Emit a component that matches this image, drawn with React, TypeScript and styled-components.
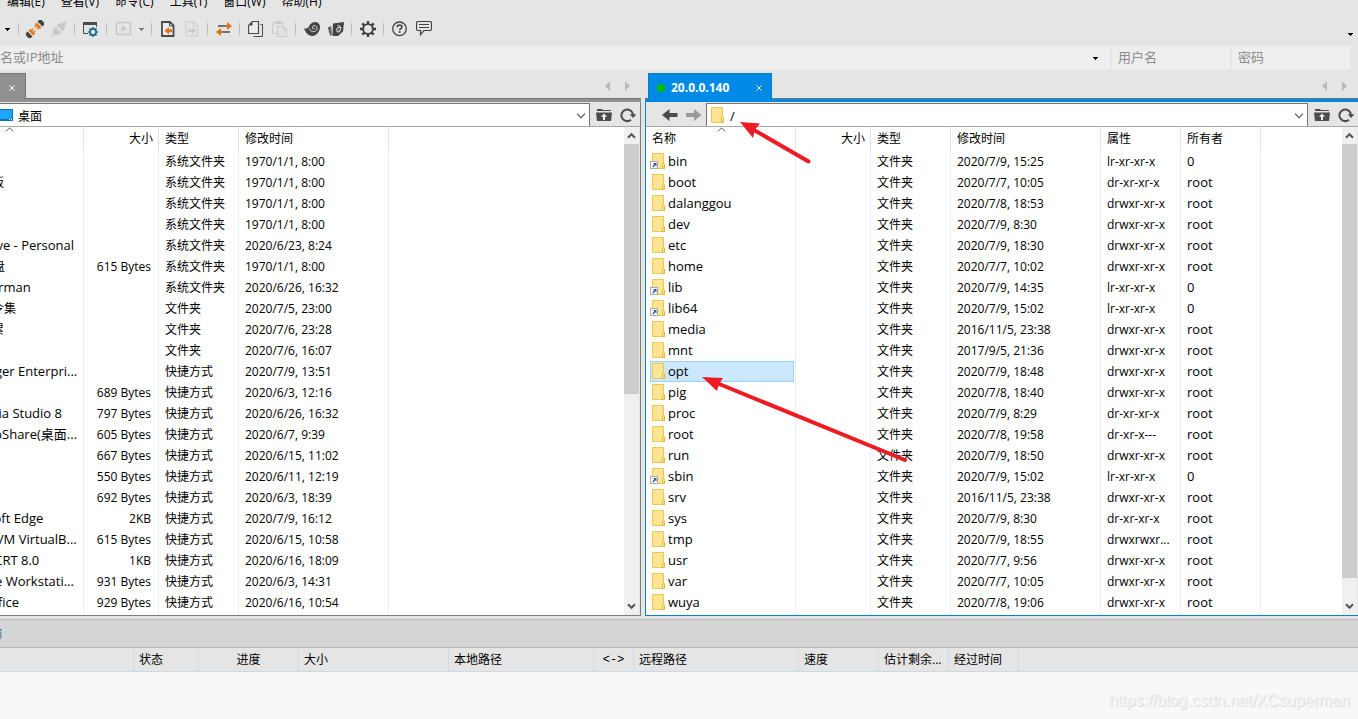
import React from "react";
import styled, { createGlobalStyle, css } from "styled-components";

const GlobalStyle = createGlobalStyle`
  * { box-sizing: border-box; }
  html, body { margin: 0; padding: 0; }
  body {
    background: #f8f8f8;
    color: #000;
    font-family: "Open Sans", "Noto Sans CJK SC", sans-serif;
    font-size: 12px;
    line-height: 16px;
    overflow: hidden;
  }
  button, input {
    font: inherit;
    color: inherit;
    border: 0;
    padding: 0;
    margin: 0;
    background: none;
    border-radius: 0;
    outline: none;
  }
`;

const Page = styled.div`
  min-height: 100vh;
  display: flex;
  flex-direction: column;
  background: #e5e5e5;
  overflow: hidden;
`;

/* ---------- menu and toolbar ---------- */

const MenuBar = styled.nav`
  height: 12px;
  display: flex;
  align-items: flex-end;
  gap: 16px;
  padding-left: 7px;
`;

const MenuButton = styled.button`
  height: 18px;
  line-height: 16px;
  padding-bottom: 2px;
  white-space: nowrap;
`;

const Toolbar = styled.div`
  height: 34px;
  display: flex;
  align-items: center;
`;

const ToolButton = styled.button<{ $width?: number }>`
  width: ${(p) => p.$width ?? 24}px;
  height: 24px;
  display: flex;
  align-items: center;
  justify-content: center;
  flex: none;
`;

const Separator = styled.span`
  width: 1px;
  height: 16px;
  margin: 0 4px 0 3px;
  background: linear-gradient(#dcdcdc, #b0b0b0, #dcdcdc);
`;

const OverflowButton = styled.button`
  margin-left: auto;
  width: 15px;
  height: 14px;
  padding-top: 1px;
  align-self: flex-end;
  display: flex;
  justify-content: center;
`;

/* ---------- quick connect ---------- */

const QuickBar = styled.form`
  height: 24px;
  display: flex;
  gap: 2px;
  padding-right: 8px;
`;

const Field = styled.label<{ $grow?: boolean }>`
  display: flex;
  align-items: center;
  overflow: hidden;
  background: #eeeeee;
  ${(p) => (p.$grow ? css`flex: 1;` : css`flex: 0 0 118px; padding-left: 6px;`)}
`;

const FieldInput = styled.input<{ $shifted?: boolean }>`
  flex: 1;
  min-width: 0;
  height: 24px;
  padding-bottom: 2px;
  font-size: 13px;
  margin-left: ${(p) => (p.$shifted ? "-26px" : "0")};
  &::placeholder { color: #8c8c8c; opacity: 1; }
`;

const DropButton = styled.button`
  width: 29px;
  height: 24px;
  display: flex;
  align-items: center;
  justify-content: center;
`;

/* ---------- panes ---------- */

const Panes = styled.main`
  display: grid;
  grid-template-columns: 641fr 713fr;
  column-gap: 4px;
`;

const Pane = styled.section`
  position: relative;
  min-width: 0;
`;

const TabStrip = styled.div<{ $inset: number }>`
  height: 29px;
  display: flex;
  align-items: flex-end;
  padding-left: ${(p) => p.$inset}px;
  border-bottom: 1px solid #757575;
`;

const Tab = styled.div<{ $active?: boolean }>`
  height: 26px;
  margin-bottom: -1px;
  display: flex;
  align-items: center;
  padding-top: 2px;
  color: #fff;
  background: ${(p) => (p.$active ? "#008ae5" : "#919191")};
  border: 1px solid ${(p) => (p.$active ? "#0a7bc8" : "#757575")};
  border-bottom: 0;
  border-left-width: ${(p) => (p.$active ? "1px" : "0")};
  width: ${(p) => (p.$active ? "124px" : "26px")};
  padding-left: ${(p) => (p.$active ? "8px" : "0")};
`;

const StatusDot = styled.span`
  width: 8px;
  height: 8px;
  border-radius: 50%;
  background: #00c000;
`;

const TabTitle = styled.span`
  flex: 1;
  padding-left: 6px;
  font-weight: 700;
`;

const TabClose = styled.button`
  width: 24px;
  height: 22px;
  display: flex;
  align-items: center;
  justify-content: center;
`;

const TabNav = styled.div<{ $end: number }>`
  margin-left: auto;
  margin-right: ${(p) => p.$end}px;
  height: 24px;
  display: flex;
  align-items: center;
`;

const Accent = styled.div<{ $active?: boolean }>`
  height: 3px;
  background: ${(p) => (p.$active ? "#008ae5" : "#919191")};
`;

const Frame = styled.div<{ $active?: boolean }>`
  border: 0 solid ${(p) => (p.$active ? "#0a7fce" : "#7d7d7d")};
  border-bottom-width: 1px;
  border-left-width: ${(p) => (p.$active ? "1px" : "0")};
  border-right-width: ${(p) => (p.$active ? "0" : "1px")};
  padding-top: 1px;
`;

const AddressRow = styled.div`
  height: 24px;
  display: flex;
  border-bottom: 1px solid #a8a8a8;
`;

const HistoryButtons = styled.div`
  width: 60px;
  display: flex;
  align-items: center;
  justify-content: flex-end;
`;

const AddressBox = styled.label<{ $left?: boolean }>`
  flex: 1;
  min-width: 0;
  display: flex;
  align-items: center;
  background: #fff;
  border: 1px solid #757575;
  border-bottom: 0;
  border-left-width: ${(p) => (p.$left ? "1px" : "0")};
  padding-left: ${(p) => (p.$left ? "3px" : "0")};
`;

const AddressInput = styled.input<{ $large?: boolean }>`
  flex: 1;
  min-width: 0;
  height: 22px;
  padding: 2px 0 0 4px;
  font-size: ${(p) => (p.$large ? "13px" : "12px")};
`;

const ComboButton = styled.button`
  width: 16px;
  height: 22px;
  padding-top: 2px;
  display: flex;
  align-items: center;
  justify-content: center;
`;

const AddressTools = styled.div`
  width: 50px;
  display: flex;
  align-items: center;
  padding-left: 2px;
`;

const Body = styled.div`
  display: flex;
  background: #fff;
`;

const TableClip = styled.div`
  flex: 1;
  min-width: 0;
  overflow: hidden;
`;

const FileTable = styled.table<{ $shift?: number }>`
  table-layout: fixed;
  width: calc(100% + ${(p) => p.$shift ?? 0}px);
  margin-left: -${(p) => p.$shift ?? 0}px;
  border-collapse: separate;
  border-spacing: 0;
  tbody tr:last-child td { padding-bottom: 2px; }
`;

const HeadCell = styled.th<{ $right?: boolean }>`
  position: relative;
  height: 24px;
  padding: 0 5px 0 6px;
  font-weight: 400;
  text-align: ${(p) => (p.$right ? "right" : "left")};
  border-right: 1px solid #e2e2e2;
  &:last-child { border-right: 0; }
`;

const SortMark = styled.svg`
  position: absolute;
  top: 0;
  left: 50%;
  margin-left: -4px;
`;

const Cell = styled.td<{ $right?: boolean }>`
  height: 21px;
  padding: 0 7px 0 6px;
  line-height: 21px;
  white-space: nowrap;
  overflow: hidden;
  text-align: ${(p) => (p.$right ? "right" : "left")};
  border-right: 1px solid #e6effb;
  &:last-child { border-right: 0; }
`;

const NameCell = styled(Cell)`
  padding: 0 1px 0 4px;
`;

const OwnerCell = styled(Cell)`
  font-size: 13px;
`;

const Entry = styled.div<{ $selected?: boolean }>`
  height: 21px;
  display: flex;
  align-items: center;
  gap: 1px;
  font-size: 13px;
  line-height: 19px;
  border: 1px solid ${(p) => (p.$selected ? "#99d1ff" : "transparent")};
  background: ${(p) => (p.$selected ? "#cce8ff" : "transparent")};
`;

const LocalEntry = styled(Entry)<{ $chinese?: boolean }>`
  font-size: ${(p) => (p.$chinese ? "12px" : "13px")};
  padding-left: ${(p) => (p.$chinese ? "17px" : "14px")};
`;

const ScrollBar = styled.div`
  width: 16px;
  display: flex;
  flex-direction: column;
  background: #f0f0f0;
  border-right: 1px solid #e5e5e5;
`;

const ScrollButton = styled.button`
  height: 17px;
  display: flex;
  align-items: center;
  justify-content: center;
`;

const Track = styled.div`
  flex: 1;
`;

const Thumb = styled.div<{ $size: number }>`
  height: ${(p) => p.$size}%;
  background: #cdcdcd;
`;

const Arrows = styled.svg`
  position: absolute;
  left: 55px;
  top: 50px;
  pointer-events: none;
`;

/* ---------- transfer window ---------- */

const TransferTitle = styled.div`
  margin-top: 3px;
  height: 29px;
  display: flex;
  align-items: center;
  background: #d6d6d6;
  border-top: 1px solid #b8b8b8;
  border-bottom: 1px solid #b8b8b8;
  overflow: hidden;
`;

const TransferLabel = styled.span`
  margin-left: -22px;
  color: #1f5c94;
`;

const TransferTable = styled.table`
  table-layout: fixed;
  width: 100%;
  border-collapse: separate;
  border-spacing: 0;
`;

const TransferHead = styled.th<{ $center?: boolean; $mono?: boolean }>`
  height: 24px;
  padding: 0 5px;
  font-weight: 400;
  white-space: nowrap;
  ${(p) => p.$mono && css`font-family: "Liberation Mono", monospace;`}
  text-align: ${(p) => (p.$center ? "center" : "left")};
  border-right: 1px solid #d0d9e6;
  border-bottom: 1px solid #ccd8e4;
  &:last-child { border-right: 0; }
`;

const Footer = styled.footer`
  flex: 1;
  min-height: 47px;
  display: flex;
  justify-content: flex-end;
  align-items: flex-end;
  padding: 0 8px 8px 0;
  background: #f8f8f8;
`;

const Watermark = styled.a`
  font-family: "Liberation Sans", sans-serif;
  font-size: 16px;
  line-height: 20px;
  color: #f2f2f2;
  text-decoration: none;
  text-shadow: 1px 1px 0 #dcdcdc;
`;

/* ---------- icons ---------- */

const Caret = ({ color = "#000" }: { color?: string }) => (
  <svg width="5" height="3" viewBox="0 0 5 3" shapeRendering="crispEdges">
    <path d="M0 0h5v1H0zM1 1h3v1H1zM2 2h1v1H2z" fill={color} />
  </svg>
);

const Chevron = () => (
  <svg width="10" height="6" viewBox="0 0 10 6">
    <path d="M1 .7l4 4 4-4" fill="none" stroke="#505050" strokeWidth="1.1" />
  </svg>
);

const ScrollArrow = ({ down }: { down?: boolean }) => (
  <svg width="9" height="7" viewBox="0 0 9 7">
    <path d={down ? "M1 1.2l3.5 3.6L8 1.2" : "M1 5.8l3.5-3.6L8 5.8"} fill="none" stroke="#555" strokeWidth="2" />
  </svg>
);

const Triangle = ({ right }: { right?: boolean }) => (
  <svg width="6" height="10" viewBox="0 0 6 10">
    <path d={right ? "M0 0l5 5-5 5z" : "M5 0L0 5l5 5z"} fill="#b8b8b8" />
  </svg>
);

const CloseMark = () => (
  <svg width="6" height="6" viewBox="0 0 6 6">
    <path d="M.5.5l5 5M5.5.5l-5 5" stroke="#fff" strokeWidth="1" />
  </svg>
);

const PlugIcon = ({ off }: { off?: boolean }) => {
  const body = off ? "#c8c8c8" : "#444";
  const pin = off ? "#c8c8c8" : "#e07b1c";
  return (
    <svg width="18" height="18" viewBox="0 0 18 18">
      <g transform="rotate(-45 9 9)">
        {off ? (
          <>
            <path d="M-2 8.3h4v1.500h-4zM16 8.300h4v1.500h-4z" fill={body} />
            <path d="M2 6.200h3v-1.400h3v8.400H5v-1.400H2zM16 6.200h-3v-1.400h-3v8.400h3v-1.400h3z" fill={body} />
            <path d="M8 7h2M8 11h2" stroke={body} />
          </>
        ) : (
          <>
            <path d="M-2 7q0-1.500 1.500-1.500H2v7H-.5Q-2 12.500-2 11zM20 7q0-1.500-1.500-1.500H16v7h2.500Q20 12.500 20 11z" fill={body} />
            <path d="M3.200 5.500H6V7h2v1.300H6v1.500h2v1.300H6v1.400H3.200zM14.800 5.500H12V7h-2v1.300h2v1.500h-2v1.300h2v1.400h2.800z" fill={pin} />
          </>
        )}
      </g>
    </svg>
  );
};

const WindowGearIcon = () => (
  <svg width="16" height="16" viewBox="1 0 16 16">
    <path d="M1 1h14v3H1z" fill="#4a4a4a" />
    <path d="M1.500 3v9.500H6M14.500 3v3" fill="none" stroke="#4a4a4a" />
    <circle cx="11" cy="11" r="3" fill="#f4f4f4" stroke="#1b7399" strokeWidth="1.800" />
    <path d="M11 6v2M11 14v2M6 11h2M14 11h2M7.500 7.500l1.400 1.400M13.100 13.100l1.400 1.400M14.500 7.500l-1.400 1.400M8.900 13.100l-1.400 1.400" stroke="#1b7399" strokeWidth="1.700" />
  </svg>
);

const PlayIcon = () => (
  <svg width="16" height="16" viewBox="0 0 16 16">
    <rect x="1.500" y="1.500" width="14" height="12" rx="1" fill="none" stroke="#c6c6c6" strokeWidth="1.400" />
    <path d="M6.500 4.300l5 3.200-5 3.200z" fill="#c6c6c6" />
  </svg>
);

const FileArrowIcon = ({ off }: { off?: boolean }) => (
  <svg width="16" height="16" viewBox="0 1 16 16">
    <path d="M2 2h8l3.500 3.500V16H2z" fill={off ? "none" : "#ececec"} stroke={off ? "#cbcbcb" : "#4a4a4a"} strokeWidth={off ? 1 : 1.800} />
    <path d="M9.500 2v4h4" fill="none" stroke={off ? "#cbcbcb" : "#4a4a4a"} />
    {off ? (
      <path d="M4 9.500h4V7l4 3.700-4 3.700V12H4z" fill="#cbcbcb" />
    ) : (
      <path d="M12 9.300H9V7l-4.500 3.700 4.500 3.700V12.200h3z" fill="#dd7314" />
    )}
  </svg>
);

const TransferIcon = () => (
  <svg width="18" height="14" viewBox="0 0 18 14">
    <path d="M3 4h9" stroke="#555" strokeWidth="1.600" />
    <path d="M12 0l5 4-5 4z" fill="#dd7314" />
    <path d="M6 10h9" stroke="#555" strokeWidth="1.600" />
    <path d="M10 4h3M5 10h3" stroke="#dd7314" strokeWidth="1.600" />
    <path d="M6 6l-5 4 5 4z" fill="#dd7314" />
  </svg>
);

const CopyIcon = () => (
  <svg width="16" height="16" viewBox="1 1 16 16">
    <path d="M5.500 1.500h6v12h-10v-8z" fill="#ededed" stroke="#4a4a4a" strokeWidth="1.200" />
    <path d="M1.500 5.500h4v-4z" fill="#4a4a4a" />
    <path d="M13.500 4.500h2v12h-9" fill="none" stroke="#4a4a4a" />
  </svg>
);

const PasteIcon = () => (
  <svg width="16" height="16" viewBox="1 1 16 16">
    <path d="M6 13.500H1.500v-11H4M10 2.500h2V5" fill="none" stroke="#cbcbcb" />
    <path d="M4 1h6v3H4z" fill="#cbcbcb" />
    <path d="M6.500 6.500h6l3 3v7h-9z" fill="#e2e2e2" stroke="#cbcbcb" />
    <path d="M12.500 6.500v3h3" fill="none" stroke="#cbcbcb" />
  </svg>
);

const ShellIcon = () => (
  <svg width="16" height="16" viewBox="0 0 16 16">
    <path d="M0 7.500c2 .5 4-.3 5-2C6 2.500 8.500 1 11 1c3.300 0 5.300 2.400 5 5.700C15.600 11 12 15 8.500 15 4.500 15 1.500 11.500 0 7.500z" fill="#444" />
    <path d="M5.300 7.500c.7 2.800 4 4 6.300 2.500 2-1.400 2-4.600-.2-5.300-1.700-.5-3.300.8-3 2.200.3 1.200 2 1.500 2.600.4" fill="none" stroke="#dedede" strokeWidth="1" />
  </svg>
);

const FtpIcon = () => (
  <svg width="16" height="16" viewBox="0 0 16 16">
    <path d="M5 2.500L16 1l-1 9.500-5 4.500H4.500z" fill="#444" />
    <path d="M0 6h2l1 9H2.500L1 11zM3 4l1 10h-1L2.200 6z" fill="#555" />
    <path d="M9.500 4.500c3 0 3.500 2.500 2.500 5s-3.500 1.600-3.200-.8S11 6 13.500 6.500" fill="none" stroke="#dedede" strokeWidth="1.100" />
  </svg>
);

const GearIcon = () => (
  <svg width="18" height="18" viewBox="0 0 18 18">
    <circle cx="9" cy="9" r="4.900" fill="none" stroke="#3f3f3f" strokeWidth="1.900" />
    <path
      d="M9 1v3M9 14v3M1 9h3M14 9h3M3.300 3.300l2 2M12.700 12.700l2 2M14.700 3.300l-2 2M5.300 12.700l-2 2"
      stroke="#3f3f3f"
      strokeWidth="2.400"
    />
  </svg>
);

const HelpIcon = () => (
  <svg width="16" height="16" viewBox="0 0 16 16">
    <circle cx="7.500" cy="7.800" r="6.800" fill="none" stroke="#444" strokeWidth="1.300" />
    <path d="M5.200 6.300c0-1.500 1-2.300 2.400-2.300 1.300 0 2.300.8 2.300 2 0 1.600-2.200 1.500-2.200 3.200" fill="none" stroke="#444" strokeWidth="1.600" />
    <path d="M6.800 10.200h1.800v1.700H6.800z" fill="#444" />
  </svg>
);

const ChatIcon = () => (
  <svg width="16" height="16" viewBox="1 1 16 16">
    <path d="M3 1.500h12q1.500 0 1.500 1.500v6q0 1.500-1.500 1.500H9L5.500 14.700V10.500H3Q1.500 10.500 1.500 9V3Q1.500 1.500 3 1.500z" fill="none" stroke="#444" strokeWidth="1.200" />
    <path d="M4 4.500h10M4 7.500h10" stroke="#444" />
  </svg>
);

const FolderIcon = ({ linked }: { linked?: boolean }) => (
  <svg width="16" height="17" viewBox="0 0 16 17" overflow="visible">
    <path d="M1.500.5h11v10.500h1v4.500h-12z" fill="#ffe494" stroke="#ecca50" />
    <path d="M11.500 15.500v-4q0-1 1-1t1 1v4z" fill="#ffe494" stroke="#dfb93c" />
    {linked && (
      <>
        <rect x="-.5" y="8.500" width="7" height="7" fill="#fff" stroke="#aaa" />
        <path d="M2 10h3.500v3.500L4.300 12.300l-2 2.200-1-1 2-2.200z" fill="#235a9c" />
      </>
    )}
  </svg>
);

const DesktopIcon = () => (
  <svg width="14" height="14" viewBox="0 0 14 14">
    <path d="M0 1h13v12H0z" fill="#0d6fb8" />
    <path d="M0 2h12v9H0z" fill="#1fa4fb" />
    <path d="M9 11.500h1M11 11.500h1" stroke="#fff" />
  </svg>
);

const HistoryArrow = ({ forward }: { forward?: boolean }) => (
  <svg width="16" height="14" viewBox="0 0 16 14">
    {forward ? (
      <path d="M0 5h8V1l7.500 6L8 13V9H0z" fill="#9a9a9a" />
    ) : (
      <path d="M15.500 5h-8V1L0 7l7.500 6V9h8z" fill="#4c4c4c" />
    )}
  </svg>
);

const FolderUpIcon = () => (
  <svg width="16" height="14" viewBox="0 0 16 14">
    <path d="M1 3V1h5l1 1h8v1z" fill="#4c4c4c" />
    <path d="M0 4.500h16L15 13H1z" fill="#4c4c4c" />
    <path d="M8 5.500l3 3.200H9V12H7V8.700H5z" fill="#eee" />
  </svg>
);

const RefreshIcon = () => (
  <svg width="16" height="16" viewBox="0 0 16 16">
    <path d="M13 8A5.800 5.800 0 1 0 11 12.700" fill="none" stroke="#4c4c4c" strokeWidth="2" />
    <path d="M9.700 7.300H16.300L13 11z" fill="#4c4c4c" />
  </svg>
);

/* ---------- data ---------- */

const menus = ["编辑(E)", "查看(V)", "命令(C)", "工具(T)", "窗口(W)", "帮助(H)"];

type LocalRow = [name: string, size: string, type: string, time: string];

const localRows: LocalRow[] = [
  ["", "", "系统文件夹", "1970/1/1, 8:00"],
  ["控制面板", "", "系统文件夹", "1970/1/1, 8:00"],
  ["", "", "系统文件夹", "1970/1/1, 8:00"],
  ["", "", "系统文件夹", "1970/1/1, 8:00"],
  ["OneDrive - Personal", "", "系统文件夹", "2020/6/23, 8:24"],
  ["WPS网盘", "615 Bytes", "系统文件夹", "1970/1/1, 8:00"],
  ["XCsuperman", "", "系统文件夹", "2020/6/26, 16:32"],
  ["常用命令集", "", "文件夹", "2020/7/5, 23:00"],
  ["日常积累", "", "文件夹", "2020/7/6, 23:28"],
  ["", "", "文件夹", "2020/7/6, 16:07"],
  ["Xmanager Enterpri...", "", "快捷方式", "2020/7/9, 13:51"],
  ["", "689 Bytes", "快捷方式", "2020/6/3, 12:16"],
  ["Camtasia Studio 8", "797 Bytes", "快捷方式", "2020/6/26, 16:32"],
  ["LetsAppShare(桌面...", "605 Bytes", "快捷方式", "2020/6/7, 9:39"],
  ["", "667 Bytes", "快捷方式", "2020/6/15, 11:02"],
  ["", "550 Bytes", "快捷方式", "2020/6/11, 12:19"],
  ["", "692 Bytes", "快捷方式", "2020/6/3, 18:39"],
  ["Microsoft Edge", "2KB", "快捷方式", "2020/7/9, 16:12"],
  ["Oracle VM VirtualB...", "615 Bytes", "快捷方式", "2020/6/15, 10:58"],
  ["SecureCRT 8.0", "1KB", "快捷方式", "2020/6/16, 18:09"],
  ["VMware Workstati...", "931 Bytes", "快捷方式", "2020/6/3, 14:31"],
  ["WPS Office", "929 Bytes", "快捷方式", "2020/6/16, 10:54"],
];

type RemoteRow = [name: string, time: string, mode: string, owner: string];

const remoteRows: RemoteRow[] = [
  ["bin", "2020/7/9, 15:25", "lr-xr-xr-x", "0"],
  ["boot", "2020/7/7, 10:05", "dr-xr-xr-x", "root"],
  ["dalanggou", "2020/7/8, 18:53", "drwxr-xr-x", "root"],
  ["dev", "2020/7/9, 8:30", "drwxr-xr-x", "root"],
  ["etc", "2020/7/9, 18:30", "drwxr-xr-x", "root"],
  ["home", "2020/7/7, 10:02", "drwxr-xr-x", "root"],
  ["lib", "2020/7/9, 14:35", "lr-xr-xr-x", "0"],
  ["lib64", "2020/7/9, 15:02", "lr-xr-xr-x", "0"],
  ["media", "2016/11/5, 23:38", "drwxr-xr-x", "root"],
  ["mnt", "2017/9/5, 21:36", "drwxr-xr-x", "root"],
  ["opt", "2020/7/9, 18:48", "drwxr-xr-x", "root"],
  ["pig", "2020/7/8, 18:40", "drwxr-xr-x", "root"],
  ["proc", "2020/7/9, 8:29", "dr-xr-xr-x", "root"],
  ["root", "2020/7/8, 19:58", "dr-xr-x---", "root"],
  ["run", "2020/7/9, 18:50", "drwxr-xr-x", "root"],
  ["sbin", "2020/7/9, 15:02", "lr-xr-xr-x", "0"],
  ["srv", "2016/11/5, 23:38", "drwxr-xr-x", "root"],
  ["sys", "2020/7/9, 8:30", "dr-xr-xr-x", "root"],
  ["tmp", "2020/7/9, 18:55", "drwxrwxr...", "root"],
  ["usr", "2020/7/7, 9:56", "drwxr-xr-x", "root"],
  ["var", "2020/7/7, 10:05", "drwxr-xr-x", "root"],
  ["wuya", "2020/7/8, 19:06", "drwxr-xr-x", "root"],
];

const transferColumns: { label: string; width?: number; center?: boolean; mono?: boolean }[] = [
  { label: "", width: 134 },
  { label: "状态", width: 65 },
  { label: "进度", width: 100, center: true },
  { label: "大小", width: 150 },
  { label: "本地路径", width: 145 },
  { label: "<->", width: 40, center: true, mono: true },
  { label: "远程路径", width: 165 },
  { label: "速度", width: 80 },
  { label: "估计剩余...", width: 70 },
  { label: "经过时间", width: 70 },
  { label: "" },
];

/* ---------- parts ---------- */

const Columns = ({ widths }: { widths: (number | undefined)[] }) => (
  <colgroup>
    {widths.map((w, i) => (
      <col key={i} width={w} />
    ))}
  </colgroup>
);

const Sort = () => (
  <SortMark width="9" height="5" viewBox="0 0 9 5">
    <path d="M1 4.300L4.500.8 8 4.300" fill="none" stroke="#555" />
  </SortMark>
);

const Scroll = ({ size }: { size: number }) => (
  <ScrollBar>
    <ScrollButton aria-label="向上滚动"><ScrollArrow /></ScrollButton>
    <Track><Thumb $size={size} /></Track>
    <ScrollButton aria-label="向下滚动"><ScrollArrow down /></ScrollButton>
  </ScrollBar>
);

const TabArrows = ({ end }: { end: number }) => (
  <TabNav $end={end}>
    <ToolButton $width={20} aria-label="上一个标签"><Triangle /></ToolButton>
    <ToolButton $width={20} aria-label="下一个标签"><Triangle right /></ToolButton>
  </TabNav>
);

const FolderTools = () => (
  <AddressTools>
    <ToolButton aria-label="上级文件夹"><FolderUpIcon /></ToolButton>
    <ToolButton aria-label="刷新"><RefreshIcon /></ToolButton>
  </AddressTools>
);

const startsChinese = (name: string) => /^(WPS)?[\u4e00-\u9fff]/.test(name);

const LocalPane = () => (
  <Pane>
    <TabStrip $inset={0}>
      <Tab><TabClose aria-label="关闭标签"><CloseMark /></TabClose></Tab>
      <TabArrows end={3} />
    </TabStrip>
    <Accent />
    <Frame>
      <AddressRow>
        <AddressBox>
          <DesktopIcon />
          <AddressInput aria-label="本地路径" defaultValue="桌面" />
          <ComboButton aria-label="展开"><Chevron /></ComboButton>
        </AddressBox>
        <FolderTools />
      </AddressRow>
      <Body>
        <TableClip>
          <FileTable $shift={66}>
            <Columns widths={[150, 75, 80, 150, undefined]} />
            <thead>
              <tr>
                <HeadCell><Sort /></HeadCell>
                <HeadCell $right>大小</HeadCell>
                <HeadCell>类型</HeadCell>
                <HeadCell>修改时间</HeadCell>
                <HeadCell />
              </tr>
            </thead>
            <tbody>
              {localRows.map(([name, size, type, time], i) => (
                <tr key={i}>
                  <NameCell><LocalEntry $chinese={startsChinese(name)}>{name}</LocalEntry></NameCell>
                  <Cell $right>{size}</Cell>
                  <Cell>{type}</Cell>
                  <Cell>{time}</Cell>
                  <Cell />
                </tr>
              ))}
            </tbody>
          </FileTable>
        </TableClip>
        <Scroll size={55} />
      </Body>
    </Frame>
  </Pane>
);

const RemotePane = () => (
  <Pane>
    <TabStrip $inset={3}>
      <Tab $active>
        <StatusDot />
        <TabTitle>20.0.0.140</TabTitle>
        <TabClose aria-label="关闭标签"><CloseMark /></TabClose>
      </Tab>
      <TabArrows end={3} />
    </TabStrip>
    <Accent $active />
    <Frame $active>
      <AddressRow>
        <HistoryButtons>
          <ToolButton aria-label="后退"><HistoryArrow /></ToolButton>
          <ToolButton aria-label="前进"><HistoryArrow forward /></ToolButton>
        </HistoryButtons>
        <AddressBox $left>
          <FolderIcon />
          <AddressInput $large aria-label="远程路径" defaultValue="/" />
          <ComboButton aria-label="展开"><Chevron /></ComboButton>
        </AddressBox>
        <FolderTools />
      </AddressRow>
      <Body>
        <TableClip>
          <FileTable>
            <Columns widths={[150, 75, 80, 150, 80, 80, undefined]} />
            <thead>
              <tr>
                <HeadCell>名称<Sort /></HeadCell>
                <HeadCell $right>大小</HeadCell>
                <HeadCell>类型</HeadCell>
                <HeadCell>修改时间</HeadCell>
                <HeadCell>属性</HeadCell>
                <HeadCell>所有者</HeadCell>
                <HeadCell />
              </tr>
            </thead>
            <tbody>
              {remoteRows.map(([name, time, mode, owner]) => (
                <tr key={name}>
                  <NameCell>
                    <Entry $selected={name === "opt"}>
                      <FolderIcon linked={mode.startsWith("l")} />
                      {name}
                    </Entry>
                  </NameCell>
                  <Cell />
                  <Cell>文件夹</Cell>
                  <Cell>{time}</Cell>
                  <Cell>{mode}</Cell>
                  <OwnerCell>{owner}</OwnerCell>
                  <Cell />
                </tr>
              ))}
            </tbody>
          </FileTable>
        </TableClip>
        <Scroll size={95.5} />
      </Body>
    </Frame>
    <Arrows width="214" height="350" viewBox="0 0 214 350">
      <g fill="#ed1c24" stroke="#ed1c24">
        <path d="M54 10L108.500 41.500" strokeWidth="4" strokeLinecap="round" />
        <path d="M40 2l20 1.500-5 6-2 8.500z" stroke="none" />
        <path d="M18 263.500L205 340" strokeWidth="4" strokeLinecap="round" />
        <path d="M2 257l21 1-4 6-2 7z" stroke="none" />
      </g>
    </Arrows>
  </Pane>
);

export default function App() {
  return (
    <Page>
      <GlobalStyle />
      <MenuBar>
        {menus.map((m) => (
          <MenuButton key={m}>{m}</MenuButton>
        ))}
      </MenuBar>
      <Toolbar>
        <ToolButton $width={15} aria-label="打开列表"><Caret /></ToolButton>
        <Separator />
        <ToolButton aria-label="重新连接"><PlugIcon /></ToolButton>
        <ToolButton aria-label="断开"><PlugIcon off /></ToolButton>
        <Separator />
        <ToolButton aria-label="会话属性"><WindowGearIcon /></ToolButton>
        <Separator />
        <ToolButton aria-label="运行"><PlayIcon /></ToolButton>
        <ToolButton $width={13} aria-label="运行列表"><Caret color="#777" /></ToolButton>
        <Separator />
        <ToolButton aria-label="接收"><FileArrowIcon /></ToolButton>
        <ToolButton aria-label="发送"><FileArrowIcon off /></ToolButton>
        <Separator />
        <ToolButton aria-label="同步"><TransferIcon /></ToolButton>
        <Separator />
        <ToolButton aria-label="复制"><CopyIcon /></ToolButton>
        <ToolButton aria-label="粘贴"><PasteIcon /></ToolButton>
        <Separator />
        <ToolButton aria-label="终端"><ShellIcon /></ToolButton>
        <ToolButton aria-label="文件传输"><FtpIcon /></ToolButton>
        <Separator />
        <ToolButton aria-label="选项"><GearIcon /></ToolButton>
        <Separator />
        <ToolButton aria-label="帮助"><HelpIcon /></ToolButton>
        <ToolButton aria-label="反馈"><ChatIcon /></ToolButton>
        <OverflowButton aria-label="更多"><Caret /></OverflowButton>
      </Toolbar>
      <QuickBar>
        <Field $grow>
          <FieldInput $shifted aria-label="主机" placeholder="主机名或IP地址" />
          <DropButton type="button" aria-label="主机列表"><Caret /></DropButton>
        </Field>
        <Field><FieldInput aria-label="用户名" placeholder="用户名" /></Field>
        <Field><FieldInput aria-label="密码" type="password" placeholder="密码" /></Field>
      </QuickBar>
      <Panes>
        <LocalPane />
        <RemotePane />
      </Panes>
      <TransferTitle><TransferLabel>传输</TransferLabel></TransferTitle>
      <TransferTable>
        <Columns widths={transferColumns.map((c) => c.width)} />
        <thead>
          <tr>
            {transferColumns.map((c, i) => (
              <TransferHead key={i} $center={c.center} $mono={c.mono}>{c.label}</TransferHead>
            ))}
          </tr>
        </thead>
      </TransferTable>
      <Footer>
        <Watermark href="https://blog.csdn.net/XCsuperman">https://blog.csdn.net/XCsuperman</Watermark>
      </Footer>
    </Page>
  );
}
